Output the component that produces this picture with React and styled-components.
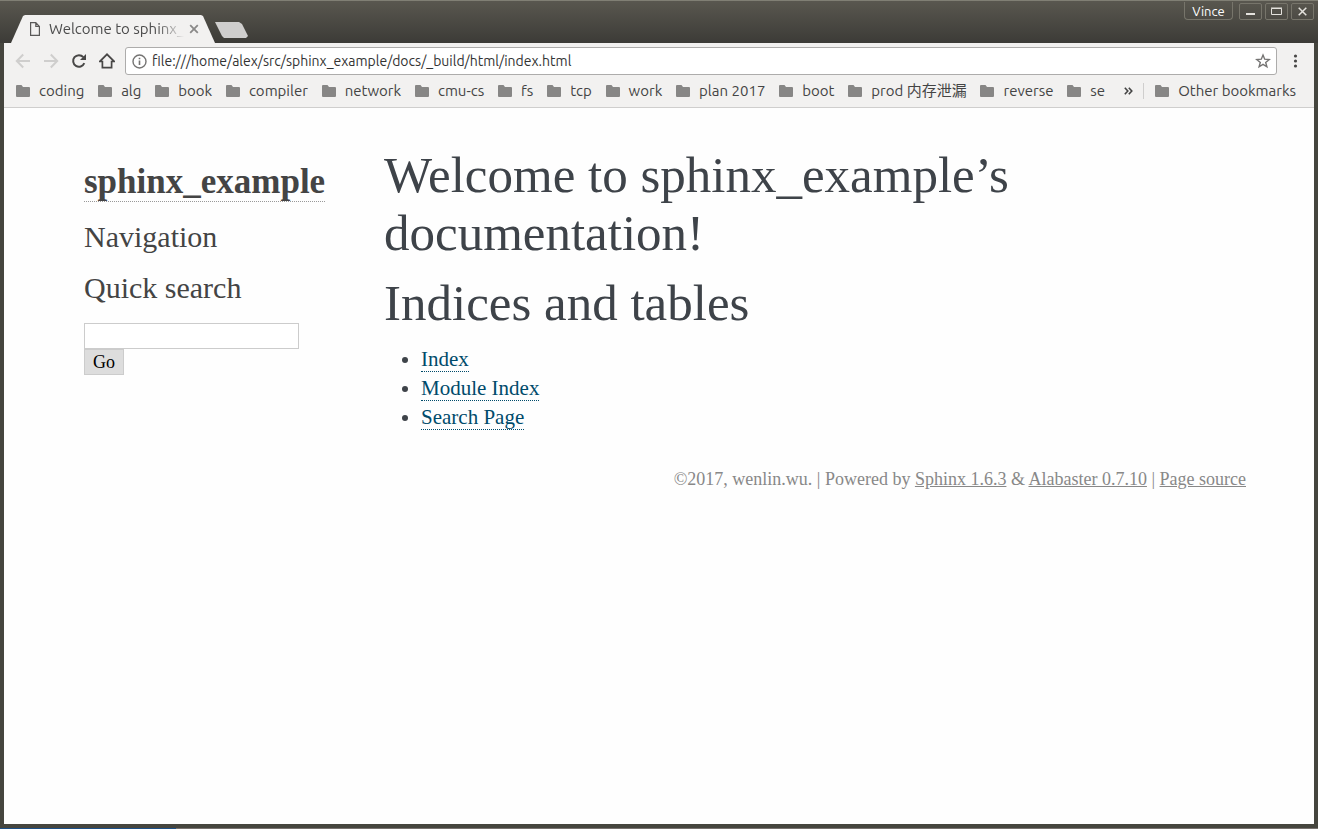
import React from "react";
import styled, { createGlobalStyle } from "styled-components";

const GlobalStyle = createGlobalStyle`
  * { box-sizing: border-box; }
  body { margin: 0; background: #fff; }
  button, input { font: inherit; margin: 0; }
  button { padding: 0; border: 0; background: none; }
  svg { display: block; flex: none; }
`;

const uiFont = `Ubuntu, "Noto Sans", "Noto Sans CJK SC", sans-serif`;

const Window = styled.div`
  min-height: 100vh;
  display: flex;
  flex-direction: column;
  background: linear-gradient(90deg, #1c4f86 0 176px, #77726f 176px);
`;

const Frame = styled.div`
  flex: 1;
  display: flex;
  flex-direction: column;
  margin-bottom: 1px;
  border: solid #45453e;
  border-width: 0 4px 4px;
  background: #fefefe;
  font-family: ${uiFont};
`;

const TitleBar = styled.header`
  display: flex;
  align-items: flex-end;
  height: 43px;
  margin: 0 -4px;
  padding: 0 4px 0 11px;
  border-top: 1px solid #807f74;
  background: linear-gradient(#59574f, #3c3b37);
`;

const Tab = styled.div`
  display: flex;
  align-items: center;
  width: 204px;
  height: 28px;
  padding: 0 16px 0 18px;
  clip-path: polygon(12px 1px, 14px 0, 190px 0, 192px 1px, 204px 100%, 0 100%);
  background: #f2f1f0;
  color: #4c4c4c;
`;

const TabTitle = styled.span`
  flex: 1;
  margin-left: 8px;
  overflow: hidden;
  white-space: nowrap;
  font-size: 15px;
  line-height: 20px;
  mask-image: linear-gradient(90deg, #000 80%, transparent 100%);
`;

const CloseTab = styled.button`
  margin-left: 5px;
  color: #8a8988;
`;

const NewTab = styled.button`
  width: 33px;
  height: 16px;
  margin: 0 0 5px;
  background: #cfcecd;
  clip-path: polygon(0 0, 24px 0, 27px 2px, 33px 14px, 31px 100%, 9px 100%, 7px 14px);
`;

const WindowControls = styled.div`
  display: flex;
  align-self: flex-start;
  gap: 3px;
  margin-left: auto;
  padding-top: 1px;
`;

const UserButton = styled.button`
  width: 49px;
  height: 18px;
  margin-right: 3px;
  border: 1px solid #77756b;
  border-top: 0;
  border-radius: 0 0 4px 4px;
  color: #fff;
  font-size: 13px;
  line-height: 16px;
`;

const ControlButton = styled.button`
  display: flex;
  align-items: center;
  justify-content: center;
  width: 23px;
  height: 17px;
  margin-top: 1px;
  border: 1px solid #77756b;
  border-radius: 2px;
  color: #e4e2dd;
`;

const Toolbar = styled.div`
  padding-top: 4px;
  border-bottom: 1px solid #cfcecd;
  background: #f2f1f0;
`;

const AddressRow = styled.div`
  display: flex;
  align-items: center;
  gap: 12px;
  padding: 0 12px 0 11px;
`;

const ToolButton = styled.button`
  width: 16px;
  height: 16px;
  color: ${(p) => (p.$dim ? "#cfcecd" : "#484746")};
`;

const AddressBox = styled.div`
  flex: 1;
  display: flex;
  align-items: center;
  gap: 5px;
  height: 28px;
  margin-left: -2px;
  padding: 0 5px 0 6px;
  border: 1px solid #adacab;
  border-radius: 3px;
  background: #fff;
  color: #757473;
`;

const AddressInput = styled.input`
  flex: 1;
  min-width: 0;
  padding: 0;
  border: 0;
  outline: 0;
  background: none;
  color: #333;
  font-size: 14px;
  line-height: 20px;
`;

const MenuButton = styled.button`
  width: 13px;
  color: #484746;
`;

const BookmarkRow = styled.nav`
  display: flex;
  align-items: center;
  height: 32px;
  padding: 0 18px 0 12px;
  color: #444;
`;

const BookmarkList = styled.div`
  flex: 1;
  display: flex;
  justify-content: space-between;
`;

const Bookmark = styled.button`
  display: flex;
  align-items: center;
  gap: 9px;
  color: inherit;
  font-size: 15px;
  line-height: 20px;
  white-space: nowrap;
`;

const Overflow = styled.button`
  margin: 0 10px 0 19px;
  color: inherit;
`;

const Divider = styled.span`
  width: 1px;
  height: 16px;
  margin-right: 11px;
  background: #cfcecd;
`;

const Page = styled.div`
  flex: 1;
  width: 100%;
  max-width: 1174px;
  margin: 0 auto;
  padding: 38px 0 32px 12px;
  color: #3e4349;
  font-family: "Liberation Serif", serif;
`;

const Columns = styled.div`
  display: flex;
  align-items: flex-start;
`;

const Sidebar = styled.aside`
  flex: none;
  width: 300px;
  padding-top: 16px;
  color: #444;
`;

const Logo = styled.h1`
  margin: 0 0 18px;
  font-size: 35px;
  line-height: 40px;
`;

const LogoLink = styled.a`
  display: inline-block;
  border-bottom: 1px dotted #999;
  color: #444;
  line-height: 39px;
  text-decoration: none;
`;

const SideHeading = styled.h3`
  display: block;
  margin: 0 0 18px;
  font-size: 30px;
  font-weight: 400;
  line-height: 33px;
`;

const SearchForm = styled.form`
  display: flex;
  flex-direction: column;
  align-items: flex-start;
  margin-top: 19px;
`;

const SearchInput = styled.input`
  width: 215px;
  height: 26px;
  padding: 0 4px;
  border: 1px solid #ccc;
  background: #fff;
  font-size: 18px;
`;

const GoButton = styled.button`
  width: 40px;
  height: 26px;
  border: 1px solid #ccc;
  background: #ddd;
  color: #000;
  font-size: 18px;
  line-height: 22px;
`;

const Main = styled.main`
  flex: 1;
  min-width: 0;
  padding-right: 38px;
`;

const Heading = styled.h1`
  margin: 0 0 12px;
  font-size: 51px;
  font-weight: 400;
  line-height: 58px;
`;

const LinkList = styled.ul`
  margin: 13px 0 0;
  padding: 0 0 0 37px;
  font-size: 21px;
  line-height: 29px;
`;

const DocLink = styled.a`
  border-bottom: 1px dotted #004b6b;
  color: #004b6b;
  text-decoration: none;
`;

const Footer = styled.footer`
  margin-top: 36px;
  color: #888;
  font-size: 18px;
  line-height: 22px;
  text-align: right;
`;

const FooterLink = styled.a`
  color: #888;
`;

const Folder = () => (
  <svg width="14" height="12" viewBox="0 0 14 12" fill="#878685">
    <path d="M1 0h4.5L7 2h6q1 0 1 1v8q0 1-1 1H1q-1 0-1-1V1q0-1 1-1z" />
  </svg>
);

const Icon = ({ size = 16, weight = 2, children }) => (
  <svg width={size} height={size} viewBox={`0 0 ${size} ${size}`} fill="none" stroke="currentColor" strokeWidth={weight}>
    {children}
  </svg>
);

const bookmarks = [
  "coding", "alg", "book", "compiler", "network", "cmu-cs", "fs", "tcp",
  "work", "plan 2017", "boot", "prod 内存泄漏", "reverse", "se",
];

export default function App() {
  return (
    <Window>
      <GlobalStyle />
      <Frame>
        <TitleBar>
          <Tab>
            <svg width="12" height="14" viewBox="0 0 12 14" fill="none" stroke="#5a5958" strokeWidth="1.2">
              <path d="M1.6.6h5.2l3.6 3.8v9H1.6zM6.8.6v3.8h3.6" />
            </svg>
            <TabTitle>Welcome to sphinx_</TabTitle>
            <CloseTab aria-label="Close tab">
              <svg width="10" height="10" viewBox="0 0 10 10" stroke="currentColor" strokeWidth="1.8">
                <path d="M1.2 1.2l7.6 7.6M8.8 1.2L1.2 8.8" />
              </svg>
            </CloseTab>
          </Tab>
          <NewTab aria-label="New tab" />
          <WindowControls>
            <UserButton>Vince</UserButton>
            <ControlButton aria-label="Minimize">
              <Icon size={11}><path d="M1 8h9" /></Icon>
            </ControlButton>
            <ControlButton aria-label="Maximize">
              <svg width="11" height="9" viewBox="0 0 11 9" fill="none" stroke="currentColor">
                <path d="M.5 1.500h10v6H.5zM0 1h11" />
              </svg>
            </ControlButton>
            <ControlButton aria-label="Close">
              <svg width="9" height="9" viewBox="0 0 9 9" stroke="currentColor" strokeWidth="1.5">
                <path d="M.7.7l7.6 7.6M8.3.7L.7 8.3" />
              </svg>
            </ControlButton>
          </WindowControls>
        </TitleBar>
        <Toolbar>
          <AddressRow>
            <ToolButton $dim aria-label="Back">
              <Icon><path d="M15 8H2.5M8.2 1.5L1.8 8l6.4 6.5" /></Icon>
            </ToolButton>
            <ToolButton $dim aria-label="Forward">
              <Icon><path d="M1 8h12.500M7.800 1.500L14.200 8l-6.400 6.500" /></Icon>
            </ToolButton>
            <ToolButton aria-label="Reload">
              <Icon>
                <path d="M13.300 10.200A5.800 5.800 0 1 1 12.300 4.100" />
                <path d="M15 1v6H9z" fill="currentColor" stroke="none" />
              </Icon>
            </ToolButton>
            <ToolButton aria-label="Home">
              <Icon weight={1.7}><path d="M2.900 8.300H1L8 1.300l7 7h-1.900M3.400 7.800v6.900h9.200V7.800" /></Icon>
            </ToolButton>
            <AddressBox>
              <svg width="15" height="15" viewBox="0 0 15 15" fill="none" stroke="currentColor" strokeWidth="1.400">
                <circle cx="7.500" cy="7.500" r="6.500" />
                <path d="M7.500 6.500v4.500M7.500 3.800v1.500" strokeWidth="1.600" />
              </svg>
              <AddressInput aria-label="Address" defaultValue="file:///home/alex/src/sphinx_example/docs/_build/html/index.html" />
              <svg width="16" height="16" viewBox="0 0 16 16" fill="none" stroke="currentColor" strokeWidth="1.400">
                <path d="M8 2l1.700 4.200 4.500.3-3.500 2.900 1.200 4.400L8 11.400l-3.900 2.400 1.200-4.400-3.500-2.900 4.500-.3z" />
              </svg>
            </AddressBox>
            <MenuButton aria-label="Menu">
              <svg width="13" height="14" viewBox="0 0 13 14" fill="currentColor">
                <circle cx="6.500" cy="2" r="1.600" />
                <circle cx="6.500" cy="7" r="1.600" />
                <circle cx="6.500" cy="12" r="1.600" />
              </svg>
            </MenuButton>
          </AddressRow>
          <BookmarkRow>
            <BookmarkList>
              {bookmarks.map((name) => (
                <Bookmark key={name}><Folder />{name}</Bookmark>
              ))}
            </BookmarkList>
            <Overflow aria-label="More bookmarks">
              <svg width="9" height="8" viewBox="0 0 9 8" fill="none" stroke="currentColor" strokeWidth="1.600">
                <path d="M.8.8L3.800 4l-3 3.200M4.800.8l3 3.200-3 3.200" />
              </svg>
            </Overflow>
            <Divider />
            <Bookmark><Folder />Other bookmarks</Bookmark>
          </BookmarkRow>
        </Toolbar>
        <Page>
          <Columns>
            <Sidebar>
              <Logo><LogoLink href="#top">sphinx_example</LogoLink></Logo>
              <SideHeading>Navigation</SideHeading>
              <SideHeading as="label" htmlFor="search">Quick search</SideHeading>
              <SearchForm onSubmit={(e) => e.preventDefault()}>
                <SearchInput id="search" type="text" />
                <GoButton>Go</GoButton>
              </SearchForm>
            </Sidebar>
            <Main>
              <Heading>Welcome to sphinx_example’s documentation!</Heading>
              <Heading as="h2">Indices and tables</Heading>
              <LinkList>
                <li><DocLink href="#index">Index</DocLink></li>
                <li><DocLink href="#modules">Module Index</DocLink></li>
                <li><DocLink href="#search">Search Page</DocLink></li>
              </LinkList>
            </Main>
          </Columns>
          <Footer>
            ©2017, wenlin.wu. | Powered by <FooterLink href="#sphinx">Sphinx 1.6.3</FooterLink> &amp;{" "}
            <FooterLink href="#alabaster">Alabaster 0.7.10</FooterLink> | <FooterLink href="#source">Page source</FooterLink>
          </Footer>
        </Page>
      </Frame>
    </Window>
  );
}
